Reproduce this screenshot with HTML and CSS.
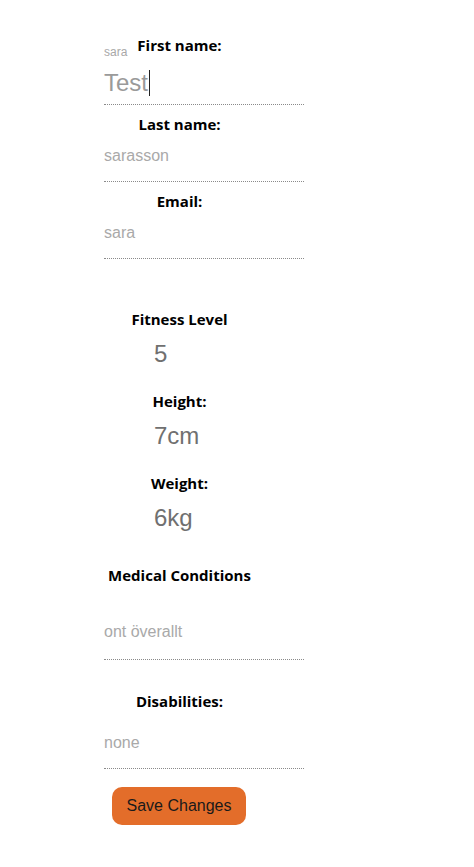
FILE: index.html
```html
<!DOCTYPE html>
<html>
<head>
<meta charset="utf-8">
<link rel="stylesheet" href="styles.css">
</head>
<body>
<form class="form">
  <div class="label-row first">
    <span class="float-hint">sara</span>
    <label class="lbl">First name:</label>
  </div>
  <div class="input big">Test<span class="caret"></span></div>

  <div class="label-row"><label class="lbl">Last name:</label></div>
  <div class="input">sarasson</div>

  <div class="label-row"><label class="lbl">Email:</label></div>
  <div class="input">sara</div>

  <div class="label-row stat-first"><label class="lbl">Fitness Level</label></div>
  <div class="value">5</div>

  <div class="label-row stat"><label class="lbl">Height:</label></div>
  <div class="value">7cm</div>

  <div class="label-row stat"><label class="lbl">Weight:</label></div>
  <div class="value">6kg</div>

  <div class="label-row med"><label class="lbl">Medical Conditions</label></div>
  <div class="input tall">ont överallt</div>

  <div class="label-row dis"><label class="lbl">Disabilities:</label></div>
  <div class="input tall2">none</div>

  <button type="button" class="save">Save Changes</button>
</form>
</body>
</html>
```
FILE: styles.css
```css
html, body {
  margin: 0;
  padding: 0;
  background: #ffffff;
}

.form {
  display: flex;
  flex-direction: column;
  align-items: flex-start;
  width: 200px;
  margin: 0 0 0 104px;
  padding-top: 36px;
}

.label-row {
  display: grid;
  grid-template-columns: 1fr auto 1fr;
  width: 151px;
  margin-top: 10px;
}

.label-row.first { margin-top: 0; }
.label-row.stat-first { margin-top: 51px; }
.label-row.stat { margin-top: 24px; }
.label-row.med { margin-top: 34px; }
.label-row.dis { margin-top: 32px; }

.lbl {
  grid-column: 2;
  font-family: "Open Sans", "Noto Sans", sans-serif;
  font-weight: 700;
  font-size: 15px;
  line-height: 18px;
  margin-bottom: 2px;
  color: #000;
  white-space: nowrap;
}

.float-hint {
  grid-column: 1;
  grid-row: 1;
  justify-self: start;
  align-self: end;
  margin-bottom: -3px;
  font-family: "Liberation Sans", Arial, sans-serif;
  font-size: 12px;
  line-height: 14px;
  color: #a8a8a8;
}

.input {
  box-sizing: border-box;
  width: 200px;
  margin-top: 11px;
  padding-bottom: 15px;
  border-bottom: 1px dotted #8a8a8a;
  font-family: "Liberation Sans", Arial, sans-serif;
  font-size: 16px;
  line-height: 20px;
  color: #a9a9a9;
}

.input.big {
  margin-top: 13px;
  padding-bottom: 7px;
  font-size: 24px;
  line-height: 28px;
  color: #9a9a9a;
}

.input.tall {
  margin-top: 36px;
  padding-bottom: 17px;
}

.input.tall2 {
  margin-top: 21px;
  padding-bottom: 15px;
}

.caret {
  display: inline-block;
  width: 1px;
  height: 26px;
  background: #222;
  vertical-align: -5px;
  margin-left: 1px;
}

.value {
  margin-top: 10px;
  padding-left: 50px;
  font-family: "Liberation Sans", Arial, sans-serif;
  font-size: 24px;
  line-height: 28px;
  color: #707070;
}

.save {
  margin: 18px 0 0 8px;
  width: 134px;
  height: 38px;
  padding: 0;
  border: none;
  border-radius: 10px;
  background: #e36d2a;
  color: #1a1a1a;
  font-family: "Liberation Sans", Arial, sans-serif;
  font-size: 16px;
}
```
